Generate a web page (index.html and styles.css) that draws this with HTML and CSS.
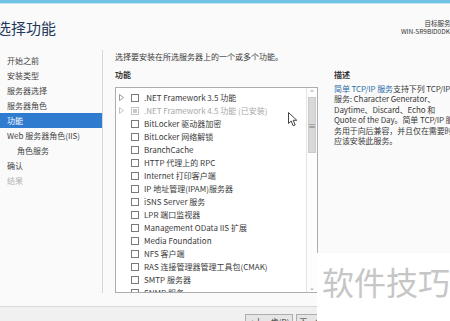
FILE: index.html
```html
<!DOCTYPE html>
<html lang="zh-CN">
<head>
    <meta charset="UTF-8">
    <title>添加角色和功能向导</title>
    <link rel="stylesheet" href="styles.css">
</head>
<body>
    <div class="topbar"></div>
    <header class="head">
        <h1 class="title">选择功能</h1>
        <div class="target">
            <div>目标服务器</div>
            <div>WIN-SR9BID0DK4L</div>
        </div>
    </header>

    <div class="main">
        <nav class="nav">
            <div class="nav-item">开始之前</div>
            <div class="nav-item">安装类型</div>
            <div class="nav-item">服务器选择</div>
            <div class="nav-item">服务器角色</div>
            <div class="nav-item active">功能</div>
            <div class="nav-item">Web 服务器角色(IIS)</div>
            <div class="nav-item sub">角色服务</div>
            <div class="nav-item">确认</div>
            <div class="nav-item off">结果</div>
        </nav>

        <section class="content">
            <p class="intro">选择要安装在所选服务器上的一个或多个功能。</p>
            <div class="cols">
                <div class="features">
                    <div class="label">功能</div>
                    <div class="listbox">
                        <ul class="list">
                            <li class="row"><span class="twisty"><svg width="5" height="7" viewBox="0 0 5 7"><polygon points="0.5,0.5 4.5,3.5 0.5,6.5" fill="none" stroke="#9a9a9a" stroke-width="1"/></svg></span><span class="check"></span>.NET Framework 3.5 功能</li>
                            <li class="row muted"><span class="twisty"><svg width="5" height="7" viewBox="0 0 5 7"><polygon points="0.5,0.5 4.5,3.5 0.5,6.5" fill="none" stroke="#c4c4c4" stroke-width="1"/></svg></span><span class="check on"></span>.NET Framework 4.5 功能 (已安装)</li>
                            <li class="row"><span class="twisty"></span><span class="check"></span>BitLocker 驱动器加密</li>
                            <li class="row"><span class="twisty"></span><span class="check"></span>BitLocker 网络解锁</li>
                            <li class="row"><span class="twisty"></span><span class="check"></span>BranchCache</li>
                            <li class="row"><span class="twisty"></span><span class="check"></span>HTTP 代理上的 RPC</li>
                            <li class="row"><span class="twisty"></span><span class="check"></span>Internet 打印客户端</li>
                            <li class="row"><span class="twisty"></span><span class="check"></span>IP 地址管理(IPAM)服务器</li>
                            <li class="row"><span class="twisty"></span><span class="check"></span>iSNS Server 服务</li>
                            <li class="row"><span class="twisty"></span><span class="check"></span>LPR 端口监视器</li>
                            <li class="row"><span class="twisty"></span><span class="check"></span>Management OData IIS 扩展</li>
                            <li class="row"><span class="twisty"></span><span class="check"></span>Media Foundation</li>
                            <li class="row"><span class="twisty"></span><span class="check"></span>NFS 客户端</li>
                            <li class="row"><span class="twisty"></span><span class="check"></span>RAS 连接管理器管理工具包(CMAK)</li>
                            <li class="row"><span class="twisty"></span><span class="check"></span>SMTP 服务器</li>
                            <li class="row"><span class="twisty"></span><span class="check"></span>SNMP 服务</li>
                        </ul>
                        <div class="scrollbar">
                            <span class="arrow">&#8963;</span>
                            <div class="thumb">&#8801;</div>
                            <div class="track"></div>
                            <span class="arrow">&#8964;</span>
                        </div>
                    </div>
                </div>

                <div class="desc">
                    <div class="label">描述</div>
                    <p class="desc-text"><span class="link">简单 TCP/IP 服务</span>支持下列 TCP/IP<br>服务: Character Generator、<br>Daytime、Discard、Echo 和<br>Quote of the Day。简单 TCP/IP 服<br>务用于向后兼容，并且仅在需要时才<br>应该安装此服务。</p>
                </div>
            </div>
        </section>
    </div>

    <footer class="foot">
        <button type="button" class="btn">&lt; 上一步(P)</button>
        <button type="button" class="btn">下一步(N) &gt;</button>
        <button type="button" class="btn">安装(I)</button>
        <button type="button" class="btn">取消</button>
    </footer>

    <div class="watermark">软件技巧</div>

    <!-- 鼠标指针 -->
    <svg class="cursor" width="10" height="15" viewBox="0 0 10 15">
        <path d="M0.5 0.5 L0.5 11.5 L3.2 9 L5.2 13.8 L7.2 13 L5.2 8.3 L8.8 8.3 Z" fill="#fff" stroke="#444" stroke-width="1" stroke-linejoin="round"/>
    </svg>
</body>
</html>
```

FILE: styles.css
```css
*{
    margin: 0;
    padding: 0;
    box-sizing: border-box;
}
body{
    width: 450px;
    height: 321px;
    overflow: hidden;
    position: relative;
    background-color: #fafafa;
    font-family: "Noto Sans CJK SC", "Noto Sans", sans-serif;
    font-size: 8px;
    color: #3a3a3a;
}
.topbar{
    height: 4px;
    background-color: #6ec4e2;
    border-bottom: 1px solid #c4e6f3;
}
.head{
    height: 46px;
    display: flex;
    justify-content: space-between;
    align-items: flex-start;
}
.title{
    margin-left: -4px;
    margin-top: 13px;
    font-size: 15px;
    line-height: 22px;
    font-weight: normal;
    color: #1e395b;
}
.target{
    margin-top: 15px;
    margin-right: -7px;
    text-align: right;
    font-size: 6.5px;
    line-height: 8px;
    color: #333;
}

.main{
    height: 256px;
    display: flex;
    padding-bottom: 13px;
}
.nav{
    width: 103px;
    padding-top: 3px;
    border-right: 1px solid #d6d6d6;
}
.nav-item{
    height: 15px;
    line-height: 15px;
    padding-left: 7px;
    white-space: nowrap;
    color: #444;
}
.nav-item.sub{
    padding-left: 17px;
}
.nav-item.active{
    background-color: #2f7bd0;
    color: #fff;
}
.nav-item.off{
    color: #b4b4b4;
}

.content{
    flex: 1;
    padding-left: 12px;
    padding-top: 1px;
    display: flex;
    flex-direction: column;
    min-width: 0;
}
.intro{
    height: 12px;
    line-height: 12px;
    white-space: nowrap;
}
.cols{
    flex: 1;
    display: flex;
    margin-top: 6px;
    min-height: 0;
}
.label{
    height: 12px;
    line-height: 12px;
    font-weight: bold;
    color: #333;
}
.features{
    width: 203px;
    display: flex;
    flex-direction: column;
}
.listbox{
    flex: 1;
    margin-top: 6px;
    display: flex;
    border: 1px solid #abadb3;
    background-color: #fff;
    overflow: hidden;
}
.list{
    flex: 1;
    list-style: none;
    padding-top: 3px;
    padding-left: 3px;
    overflow: hidden;
}
.row{
    height: 13px;
    display: flex;
    align-items: center;
    white-space: nowrap;
    color: #3a3a3a;
}
.row.muted{
    color: #a8a8a8;
}
.twisty{
    width: 12px;
    display: flex;
    align-items: center;
}
.check{
    width: 8px;
    height: 8px;
    margin-right: 5px;
    border: 1px solid #7a7a7a;
    background-color: #fff;
    display: flex;
    align-items: center;
    justify-content: center;
}
.check.on{
    border-color: #c4c4c4;
}
.check.on::after{
    content: "";
    width: 4px;
    height: 4px;
    background-color: #c8c8c8;
}
.scrollbar{
    width: 11px;
    display: flex;
    flex-direction: column;
    border-left: 1px solid #e4e4e4;
    background-color: #fdfdfd;
}
.arrow{
    height: 9px;
    line-height: 9px;
    font-size: 7px;
    text-align: center;
    color: #8a8a8a;
}
.thumb{
    height: 56px;
    margin: 0 1px;
    background-color: #d9d9d9;
    border: 1px solid #cacaca;
    color: #7a7a7a;
    font-size: 8px;
    display: flex;
    align-items: center;
    justify-content: center;
}
.track{
    flex: 1;
}

.desc{
    margin-left: 16px;
    flex: 1;
    min-width: 0;
    overflow: hidden;
}
.desc-text{
    margin-top: 3px;
    line-height: 10.4px;
    white-space: nowrap;
    letter-spacing: -0.1px;
    color: #3a3a3a;
}
.link{
    color: #2a6ea8;
}

.foot{
    height: 15px;
    display: flex;
    justify-content: flex-end;
    gap: 3px;
    padding-top: 7px;
    padding-right: 4px;
    background-color: #f0f0f0;
    border-top: 1px solid #dadada;
    overflow: visible;
}
.btn{
    width: 48px;
    height: 15px;
    flex-shrink: 0;
    font-family: inherit;
    font-size: 8px;
    line-height: 12px;
    color: #333;
    background-color: #e5e5e5;
    border: 1px solid #adadad;
}

.watermark{
    position: absolute;
    left: 317px;
    top: 253px;
    width: 133px;
    height: 68px;
    padding-left: 5px;
    padding-top: 5px;
    background-color: #fff;
    font-size: 32px;
    line-height: 46px;
    color: #c6c6c6;
    white-space: nowrap;
}
.cursor{
    position: absolute;
    left: 288px;
    top: 112px;
}
```
